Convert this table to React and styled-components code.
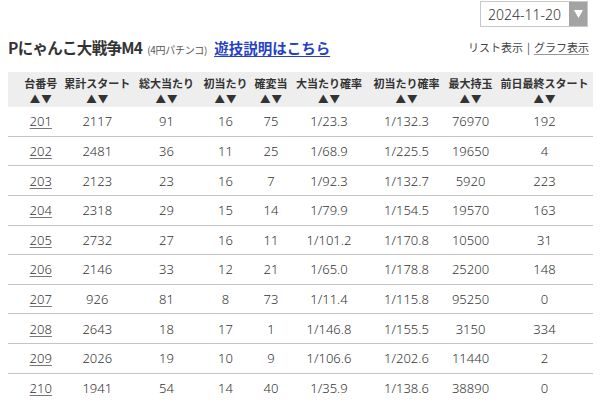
import React from "react";
import styled, { createGlobalStyle } from "styled-components";

const Global = createGlobalStyle`
  html, body { margin: 0; padding: 0; background: #fff; }
  body {
    font-family: "Noto Sans CJK JP", "Noto Sans", sans-serif;
    color: #333;
    overflow: hidden;
  }
`;

const Page = styled.div`
  width: 585px;
  padding: 0 7px 0 8px;
`;

const TopBar = styled.div`
  display: flex;
  justify-content: flex-end;
  padding: 1px 5px 0 0;
`;

const DateSelect = styled.div`
  display: flex;
  width: 108px;
  height: 26px;
  box-sizing: border-box;
  border: 1px solid #c8c8c8;
  background: #fff;
`;

const DateText = styled.span`
  flex: 1;
  display: flex;
  align-items: center;
  padding-left: 7px;
  font-family: "Noto Sans", sans-serif;
  font-size: 14px;
  font-weight: 300;
  color: #333;
`;

const DropButton = styled.span`
  width: 18px;
  background: #a3a3a3;
  display: flex;
  align-items: center;
  justify-content: center;
`;

const TitleRow = styled.div`
  display: flex;
  align-items: center;
  justify-content: space-between;
  height: 22px;
  margin-top: 9px;
  margin-bottom: 14px;
`;

const TitleGroup = styled.div`
  display: flex;
  align-items: baseline;
`;

const Title = styled.h1`
  margin: 0;
  font-size: 15.5px;
  font-weight: 700;
  color: #333;
  letter-spacing: -0.7px;
`;

const SubNote = styled.span`
  font-size: 10px;
  color: #555;
  margin: 0 7px 0 5px;
  letter-spacing: -0.3px;
`;

const GuideLink = styled.a`
  font-size: 14.5px;
  font-weight: 700;
  color: #2540c8;
  text-decoration: underline;
  text-underline-offset: 2px;
  cursor: pointer;
`;

const ViewSwitch = styled.div`
  font-size: 11px;
  color: #444;
  padding-right: 4px;
  display: flex;
  gap: 4px;
`;

const ViewLink = styled.a`
  color: #444;
  text-decoration: underline;
  text-decoration-color: #999;
  text-underline-offset: 2px;
`;

const Table = styled.table`
  width: 585px;
  table-layout: fixed;
  border-collapse: collapse;
`;

const Col = styled.col`
  width: ${(p) => p.$w}px;
`;

const HeadRow = styled.tr`
  background: #eeeeee;
`;

const Th = styled.th`
  padding: 3px 0 0 ${(p) => (p.$first ? 13 : 0)}px;
  font-size: 11px;
  font-weight: 700;
  line-height: 16px;
  color: #333;
  text-align: center;
  white-space: nowrap;
  vertical-align: top;
`;

const Arrows = styled.div`
  font-size: 10.5px;
  line-height: 16px;
  letter-spacing: 1px;
  padding-left: 1px;
  color: #333;
`;

const Row = styled.tr`
  border-bottom: ${(p) => (p.$last ? "none" : "1px solid #c4c4c4")};
`;

const Td = styled.td`
  height: 28.625px;
  padding: 0 0 0 ${(p) => (p.$first ? 13 : 0)}px;
  font-family: "Noto Sans", sans-serif;
  font-size: 13px;
  font-weight: 300;
  color: #333;
  text-align: center;
  vertical-align: middle;
  white-space: nowrap;
`;

const NumLink = styled.a`
  color: #333;
  text-decoration: underline;
  text-decoration-color: #777;
  text-underline-offset: 2px;
`;

const widths = [52.5, 73.5, 65, 53, 38, 78, 77, 51, 97];
const headers = [
  "台番号",
  "累計スタート",
  "総大当たり",
  "初当たり",
  "確変当",
  "大当たり確率",
  "初当たり確率",
  "最大持玉",
  "前日最終スタート",
];

const rows = [
  ["201", "2117", "91", "16", "75", "1/23.3", "1/132.3", "76970", "192"],
  ["202", "2481", "36", "11", "25", "1/68.9", "1/225.5", "19650", "4"],
  ["203", "2123", "23", "16", "7", "1/92.3", "1/132.7", "5920", "223"],
  ["204", "2318", "29", "15", "14", "1/79.9", "1/154.5", "19570", "163"],
  ["205", "2732", "27", "16", "11", "1/101.2", "1/170.8", "10500", "31"],
  ["206", "2146", "33", "12", "21", "1/65.0", "1/178.8", "25200", "148"],
  ["207", "926", "81", "8", "73", "1/11.4", "1/115.8", "95250", "0"],
  ["208", "2643", "18", "17", "1", "1/146.8", "1/155.5", "3150", "334"],
  ["209", "2026", "19", "10", "9", "1/106.6", "1/202.6", "11440", "2"],
  ["210", "1941", "54", "14", "40", "1/35.9", "1/138.6", "38890", "0"],
];

export default function App() {
  return (
    <>
      <Global />
      <Page>
        <TopBar>
          <DateSelect>
            <DateText>2024-11-20</DateText>
            <DropButton>
              <svg width="9" height="8" viewBox="0 0 9 8">
                <path d="M0 0 H9 L4.5 8 Z" fill="#fff" />
              </svg>
            </DropButton>
          </DateSelect>
        </TopBar>
        <TitleRow>
          <TitleGroup>
            <Title>Pにゃんこ大戦争M4</Title>
            <SubNote>(4円パチンコ)</SubNote>
            <GuideLink>遊技説明はこちら</GuideLink>
          </TitleGroup>
          <ViewSwitch>
            <span>リスト表示</span>
            <span>|</span>
            <ViewLink>グラフ表示</ViewLink>
          </ViewSwitch>
        </TitleRow>
        <Table>
          <colgroup>
            {widths.map((w, i) => (
              <Col key={i} $w={w} />
            ))}
          </colgroup>
          <thead>
            <HeadRow>
              {headers.map((h, i) => (
                <Th key={h} $first={i === 0}>
                  {h}
                  <Arrows>▲▼</Arrows>
                </Th>
              ))}
            </HeadRow>
          </thead>
          <tbody>
            {rows.map((r, ri) => (
              <Row key={r[0]} $last={ri === rows.length - 1}>
                {r.map((c, ci) => (
                  <Td key={ci} $first={ci === 0}>
                    {ci === 0 ? <NumLink>{c}</NumLink> : c}
                  </Td>
                ))}
              </Row>
            ))}
          </tbody>
        </Table>
      </Page>
    </>
  );
}
